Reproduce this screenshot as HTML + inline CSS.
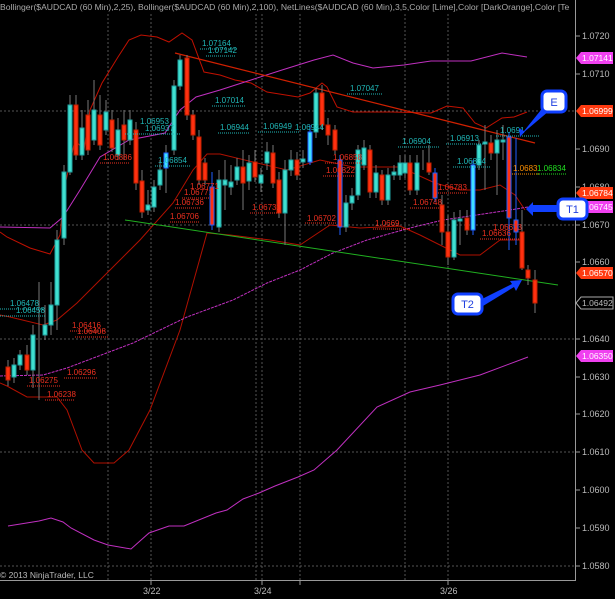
<!DOCTYPE html>
<html><head><meta charset="utf-8"><style>
html,body{margin:0;padding:0;background:#000;width:615px;height:599px;overflow:hidden}
svg{display:block;font-family:"Liberation Sans",sans-serif}
</style></head><body>
<svg width="615" height="599" viewBox="0 0 615 599" xmlns="http://www.w3.org/2000/svg">
<rect width="615" height="599" fill="#000"/>
<!-- grid -->
<g stroke="#555" stroke-width="1" stroke-dasharray="2,2">
<line x1="0" y1="111" x2="575" y2="111"/><line x1="0" y1="225" x2="575" y2="225"/>
<line x1="0" y1="339" x2="575" y2="339"/><line x1="0" y1="452" x2="575" y2="452"/>
<line x1="0" y1="566" x2="575" y2="566"/>
<line x1="108" y1="14" x2="108" y2="580"/><line x1="151" y1="14" x2="151" y2="580"/>
<line x1="256" y1="14" x2="256" y2="580"/><line x1="262" y1="14" x2="262" y2="580"/>
<line x1="300" y1="14" x2="300" y2="580"/><line x1="405" y1="14" x2="405" y2="580"/>
<line x1="448" y1="14" x2="448" y2="580"/>
</g>
<!-- axes -->
<g stroke="#999" stroke-width="1">
<line x1="575.5" y1="0" x2="575.5" y2="581"/><line x1="0" y1="580.5" x2="576" y2="580.5"/>
<line x1="151" y1="581" x2="151" y2="585"/><line x1="262" y1="581" x2="262" y2="585"/>
<line x1="300" y1="581" x2="300" y2="585"/><line x1="448" y1="581" x2="448" y2="585"/>
<line x1="576" y1="36" x2="580" y2="36"/><line x1="576" y1="74" x2="580" y2="74"/>
<line x1="576" y1="149" x2="580" y2="149"/><line x1="576" y1="187" x2="580" y2="187"/>
<line x1="576" y1="225" x2="580" y2="225"/><line x1="576" y1="262" x2="580" y2="262"/>
<line x1="576" y1="339" x2="580" y2="339"/><line x1="576" y1="377" x2="580" y2="377"/>
<line x1="576" y1="414" x2="580" y2="414"/><line x1="576" y1="452" x2="580" y2="452"/>
<line x1="576" y1="490" x2="580" y2="490"/><line x1="576" y1="528" x2="580" y2="528"/>
<line x1="576" y1="566" x2="580" y2="566"/>
</g>
<g fill="#bbb" font-size="9">
<text x="582" y="39">1.0720</text><text x="582" y="77">1.0710</text><text x="582" y="152">1.0690</text>
<text x="582" y="190">1.0680</text><text x="582" y="228">1.0670</text><text x="582" y="265">1.0660</text>
<text x="582" y="342">1.0640</text><text x="582" y="380">1.0630</text><text x="582" y="417">1.0620</text>
<text x="582" y="455">1.0610</text><text x="582" y="493">1.0600</text><text x="582" y="531">1.0590</text>
<text x="582" y="569">1.0580</text>
<text x="143" y="594">3/22</text><text x="254" y="594">3/24</text><text x="440" y="594">3/26</text>
<text x="0" y="578" font-size="8.5">© 2013 NinjaTrader, LLC</text>
</g>
<text x="0" y="10" fill="#aaa" font-size="8.6">Bollinger($AUDCAD (60 Min),2,25), Bollinger($AUDCAD (60 Min),2,100), NetLines($AUDCAD (60 Min),3,5,Color [Lime],Color [DarkOrange],Color [Te</text>

<!-- indicator lines -->
<g fill="none" stroke-width="1">
<polyline stroke="#c01000" points="0,232 7,237 30,248 50,254 60,235 65,185 75,140 84,150 90,110 102,83 118,57 129,40 141,35 157,37 169,42 182,33 192,40 204,72 220,75 235,80 251,83 267,92 298,97 310,93 322,83 327,87 337,107 353,112 392,112 431,113 447,106 463,108 475,123 486,128 502,118 514,117 527,112"/>
<polyline stroke="#b01000" points="0,315 10,317 43,325 57,320 77,303 107,273 140,240 173,203 193,170 207,154 220,154 253,162 287,170 320,160 353,167 400,167 435,183 460,190 480,190 500,185 515,195 525,210"/>
<polyline stroke="#b01000" points="0,383 7,386 27,397 57,397 67,410 82,450 94,463 114,463 129,450 150,410 180,330 207,233 230,235 270,240 300,245 330,225 360,228 400,226 420,235 440,245 460,255 480,255 500,240 520,240"/>
<polyline stroke="#c030c0" points="0,227 50,228 63,217 80,190 100,157 129,140 165,133 180,110 196,97 220,90 251,80 282,70 314,60 333,55 353,63 373,68 404,65 431,61 471,61 502,53 527,57"/>
<polyline stroke="#c030c0" stroke-dasharray="3,1" points="0,376 43,375 67,368 133,343 187,317 233,300 267,283 300,270 333,253 367,240 410,228 443,220 510,210 528,207"/>
<polyline stroke="#c030c0" points="8,526 39,521 51,518 63,522 71,528 94,540 108,545 131,549 149,533 169,526 184,526 216,513 227,510 243,499 259,493 275,486 298,477 314,470 337,450 377,407 410,392 440,385 480,375 528,357"/>
<line x1="125" y1="220" x2="558" y2="285" stroke="#20b020"/>
<line x1="175" y1="53" x2="535" y2="143" stroke="#d02000" stroke-width="1.3"/>
</g>

<!-- candles -->
<g stroke="#777" stroke-width="1">
<line x1="8" y1="360" x2="8" y2="386"/><line x1="14" y1="358" x2="14" y2="383"/><line x1="20" y1="350" x2="20" y2="370"/>
<line x1="27" y1="345" x2="27" y2="375"/><line x1="33" y1="325" x2="33" y2="388"/><line x1="39" y1="282" x2="39" y2="400"/>
<line x1="45" y1="305" x2="45" y2="340"/><line x1="51" y1="282" x2="51" y2="335"/><line x1="57" y1="230" x2="57" y2="330"/>
<line x1="64" y1="165" x2="64" y2="245"/><line x1="70" y1="95" x2="70" y2="175"/><line x1="76" y1="95" x2="76" y2="160"/>
<line x1="82" y1="110" x2="82" y2="160"/><line x1="88" y1="100" x2="88" y2="155"/><line x1="94" y1="80" x2="94" y2="145"/>
<line x1="100" y1="95" x2="100" y2="150"/><line x1="106" y1="100" x2="106" y2="135"/><line x1="112" y1="110" x2="112" y2="152"/>
<line x1="118" y1="118" x2="118" y2="160"/><line x1="124" y1="110" x2="124" y2="160"/><line x1="130" y1="110" x2="130" y2="145"/>
<line x1="136" y1="122" x2="136" y2="190"/><line x1="142" y1="170" x2="142" y2="218"/><line x1="148" y1="190" x2="148" y2="215"/>
<line x1="154" y1="180" x2="154" y2="212"/><line x1="160" y1="160" x2="160" y2="190"/><line x1="166" y1="145" x2="166" y2="193"/>
<line x1="174" y1="80" x2="174" y2="155"/><line x1="180" y1="55" x2="180" y2="90"/><line x1="187" y1="55" x2="187" y2="120"/>
<line x1="193" y1="110" x2="193" y2="140"/><line x1="199" y1="130" x2="199" y2="185"/><line x1="205" y1="158" x2="205" y2="185"/>
<line x1="212" y1="172" x2="212" y2="230" stroke="#2060ff"/><line x1="219" y1="170" x2="219" y2="232"/><line x1="225" y1="160" x2="225" y2="210"/>
<line x1="231" y1="165" x2="231" y2="195"/><line x1="237" y1="158" x2="237" y2="185"/><line x1="243" y1="150" x2="243" y2="210"/>
<line x1="249" y1="155" x2="249" y2="190"/><line x1="255" y1="150" x2="255" y2="182"/><line x1="261" y1="168" x2="261" y2="192"/>
<line x1="267" y1="142" x2="267" y2="170"/><line x1="273" y1="145" x2="273" y2="188"/><line x1="279" y1="172" x2="279" y2="218"/>
<line x1="285" y1="160" x2="285" y2="245"/><line x1="291" y1="150" x2="291" y2="176"/><line x1="297" y1="152" x2="297" y2="180"/>
<line x1="303" y1="150" x2="303" y2="168"/><line x1="310" y1="125" x2="310" y2="165" stroke="#2060ff"/><line x1="316" y1="88" x2="316" y2="138"/>
<line x1="322" y1="85" x2="322" y2="130"/><line x1="328" y1="118" x2="328" y2="145"/><line x1="335" y1="125" x2="335" y2="155"/>
<line x1="340" y1="155" x2="340" y2="235" stroke="#2060ff"/><line x1="346" y1="195" x2="346" y2="232"/><line x1="352" y1="188" x2="352" y2="210"/>
<line x1="358" y1="145" x2="358" y2="200"/><line x1="364" y1="140" x2="364" y2="170"/><line x1="370" y1="145" x2="370" y2="198"/>
<line x1="376" y1="165" x2="376" y2="198"/><line x1="382" y1="170" x2="382" y2="205"/><line x1="388" y1="168" x2="388" y2="205"/>
<line x1="394" y1="165" x2="394" y2="180"/><line x1="400" y1="155" x2="400" y2="180"/><line x1="405" y1="155" x2="405" y2="178"/>
<line x1="410" y1="155" x2="410" y2="195"/><line x1="417" y1="155" x2="417" y2="195"/><line x1="423" y1="150" x2="423" y2="170"/>
<line x1="429" y1="145" x2="429" y2="175"/><line x1="435" y1="168" x2="435" y2="202" stroke="#2060ff"/><line x1="442" y1="195" x2="442" y2="245"/>
<line x1="448" y1="215" x2="448" y2="265"/><line x1="454" y1="212" x2="454" y2="260"/><line x1="460" y1="210" x2="460" y2="245"/>
<line x1="467" y1="210" x2="467" y2="235"/><line x1="473" y1="160" x2="473" y2="235" stroke="#2060ff"/><line x1="479" y1="140" x2="479" y2="170"/>
<line x1="485" y1="125" x2="485" y2="190"/><line x1="491" y1="135" x2="491" y2="160"/><line x1="497" y1="130" x2="497" y2="195"/>
<line x1="503" y1="125" x2="503" y2="160"/><line x1="509" y1="132" x2="509" y2="250" stroke="#2060ff"/><line x1="516" y1="138" x2="516" y2="245" stroke="#2060ff"/>
<line x1="522" y1="210" x2="522" y2="270"/><line x1="528" y1="265" x2="528" y2="285"/><line x1="535" y1="270" x2="535" y2="313"/>
</g>
<g stroke-width="1">
<g fill="#40e0d0" stroke="#20a0a0">
<rect x="12" y="365" width="4" height="12"/><rect x="18" y="355" width="4" height="10"/><rect x="31" y="335" width="4" height="35"/>
<rect x="43" y="325" width="4" height="10"/><rect x="49" y="305" width="4" height="20"/><rect x="55" y="240" width="4" height="65"/>
<rect x="62" y="172" width="4" height="66"/><rect x="68" y="105" width="4" height="67"/><rect x="80" y="128" width="4" height="27"/>
<rect x="92" y="110" width="4" height="30"/><rect x="104" y="112" width="4" height="18"/><rect x="116" y="130" width="4" height="25"/>
<rect x="128" y="120" width="4" height="20"/><rect x="146" y="205" width="4" height="5"/><rect x="152" y="187" width="4" height="20"/>
<rect x="158" y="170" width="4" height="15"/><rect x="172" y="86" width="4" height="64"/><rect x="178" y="60" width="4" height="26"/>
<rect x="217" y="180" width="4" height="47"/><rect x="223" y="180" width="4" height="5"/><rect x="229" y="182" width="4" height="5"/>
<rect x="235" y="167" width="4" height="13"/><rect x="247" y="163" width="4" height="18"/><rect x="259" y="175" width="4" height="8"/>
<rect x="265" y="152" width="4" height="11"/><rect x="283" y="170" width="4" height="43"/><rect x="289" y="160" width="4" height="10"/>
<rect x="301" y="159" width="4" height="3"/><rect x="314" y="93" width="4" height="39"/><rect x="344" y="203" width="4" height="24"/>
<rect x="350" y="196" width="4" height="7"/><rect x="356" y="150" width="4" height="45"/><rect x="362" y="148" width="4" height="17"/>
<rect x="374" y="173" width="4" height="19"/><rect x="386" y="175" width="4" height="25"/><rect x="392" y="172" width="4" height="3"/>
<rect x="398" y="163" width="4" height="12"/><rect x="403" y="163" width="4" height="10"/><rect x="415" y="163" width="4" height="27"/>
<rect x="452" y="220" width="4" height="37"/><rect x="458" y="219" width="4" height="2"/><rect x="477" y="145" width="4" height="20"/>
<rect x="483" y="142" width="4" height="2"/><rect x="495" y="140" width="4" height="13"/><rect x="501" y="140" width="4" height="2"/>
</g>
<g fill="#ff3010" stroke="#c02000">
<rect x="6" y="367" width="4" height="13"/><rect x="25" y="355" width="4" height="15"/><rect x="74" y="105" width="4" height="50"/>
<rect x="86" y="115" width="4" height="35"/><rect x="98" y="115" width="4" height="30"/><rect x="110" y="120" width="4" height="28"/>
<rect x="122" y="125" width="4" height="15"/><rect x="134" y="130" width="4" height="53"/><rect x="140" y="181" width="4" height="31"/>
<rect x="185" y="58" width="4" height="57"/><rect x="191" y="115" width="4" height="20"/><rect x="197" y="137" width="4" height="43"/>
<rect x="203" y="163" width="4" height="17"/><rect x="241" y="167" width="4" height="16"/><rect x="253" y="162" width="4" height="15"/>
<rect x="271" y="153" width="4" height="30"/><rect x="277" y="180" width="4" height="33"/><rect x="295" y="160" width="4" height="15"/>
<rect x="320" y="93" width="4" height="32"/><rect x="326" y="125" width="4" height="10"/><rect x="333" y="130" width="4" height="20"/>
<rect x="368" y="150" width="4" height="42"/><rect x="380" y="175" width="4" height="25"/><rect x="408" y="163" width="4" height="27"/>
<rect x="427" y="163" width="4" height="9"/><rect x="440" y="205" width="4" height="27"/><rect x="446" y="232" width="4" height="25"/>
<rect x="465" y="218" width="4" height="12"/><rect x="489" y="143" width="4" height="10"/>
<rect x="520" y="232" width="4" height="36"/><rect x="526" y="270" width="4" height="8"/><rect x="533" y="280" width="4" height="23"/>
</g>
<rect x="164" y="153" width="4" height="15" fill="#40e0ff" stroke="#2060ff"/>
<rect x="210" y="187" width="4" height="38" fill="#ff3010" stroke="#2060ff"/>
<rect x="308" y="132" width="4" height="30" fill="#40e0ff" stroke="#2060ff"/>
<rect x="338" y="160" width="4" height="67" fill="#ff3010" stroke="#2060ff"/>
<rect x="433" y="173" width="4" height="25" fill="#ff3010" stroke="#2060ff"/>
<rect x="471" y="165" width="4" height="65" fill="#40e0ff" stroke="#2060ff"/>
<rect x="507" y="137" width="4" height="81" fill="#ff3010" stroke="#2060ff"/>
<rect x="514" y="220" width="4" height="12" fill="#ff3010" stroke="#2060ff"/>
</g>

<!-- level labels -->
<g font-size="8" fill="#20b8b8">
<text x="202" y="46">1.07164</text><text x="208" y="53">1.07142</text><text x="215" y="103">1.07014</text>
<text x="350" y="91">1.07047</text><text x="220" y="130">1.06944</text><text x="263" y="129">1.06949</text>
<text x="295" y="130">1.06944</text><text x="140" y="124">1.06953</text><text x="145" y="131">1.06937</text>
<text x="402" y="144">1.06904</text><text x="450" y="141">1.06913</text><text x="500" y="133">1.0691</text>
<text x="158" y="163">1.06854</text><text x="457" y="164">1.06834</text>
<text x="10" y="306">1.06478</text><text x="16" y="313">1.06458</text>
</g>
<g stroke="#20b8b8" stroke-dasharray="1,1">
<line x1="200" y1="49" x2="238" y2="49"/><line x1="206" y1="56" x2="236" y2="56"/><line x1="212" y1="106" x2="246" y2="106"/>
<line x1="347" y1="94" x2="382" y2="94"/><line x1="218" y1="133" x2="250" y2="133"/><line x1="258" y1="132" x2="300" y2="132"/>
<line x1="125" y1="134" x2="180" y2="134"/><line x1="398" y1="147" x2="440" y2="147"/><line x1="446" y1="144" x2="485" y2="144"/>
<line x1="496" y1="136" x2="540" y2="136"/><line x1="155" y1="166" x2="190" y2="166"/><line x1="453" y1="167" x2="490" y2="167"/>
<line x1="0" y1="309" x2="44" y2="309"/><line x1="0" y1="316" x2="46" y2="316"/>
</g>
<g font-size="8" fill="#ee3020">
<text x="103" y="160">1.06886</text><text x="333" y="160">1.06858</text><text x="326" y="173">1.06822</text>
<text x="190" y="189">1.06771</text><text x="184" y="195">1.06771</text><text x="175" y="205">1.06736</text><text x="170" y="219">1.06706</text>
<text x="252" y="210">1.06732</text><text x="307" y="221">1.06702</text><text x="375" y="226">1.0669</text>
<text x="438" y="190">1.06783</text><text x="413" y="205">1.06748</text><text x="493" y="230">1.06633</text><text x="482" y="236">1.06636</text>
<text x="72" y="328">1.06416</text><text x="77" y="334">1.06408</text><text x="67" y="375">1.06296</text>
<text x="29" y="383">1.06275</text><text x="47" y="397">1.06238</text>
</g>
<g stroke="#ee3020" stroke-dasharray="1,1">
<line x1="100" y1="163" x2="130" y2="163"/><line x1="325" y1="163" x2="362" y2="163"/><line x1="323" y1="176" x2="355" y2="176"/>
<line x1="182" y1="198" x2="210" y2="198"/><line x1="175" y1="208" x2="200" y2="208"/><line x1="170" y1="222" x2="200" y2="222"/>
<line x1="250" y1="213" x2="280" y2="213"/><line x1="305" y1="223" x2="336" y2="223"/><line x1="373" y1="229" x2="410" y2="229"/>
<line x1="436" y1="193" x2="467" y2="193"/><line x1="410" y1="208" x2="442" y2="208"/><line x1="480" y1="239" x2="520" y2="239"/>
<line x1="70" y1="331" x2="105" y2="331"/><line x1="75" y1="337" x2="108" y2="337"/><line x1="64" y1="378" x2="98" y2="378"/>
<line x1="27" y1="386" x2="60" y2="386"/><line x1="45" y1="400" x2="75" y2="400"/>
</g>
<text x="513" y="171" font-size="8" fill="#ff9000">1.0683</text>
<line x1="512" y1="174" x2="540" y2="174" stroke="#ff9000" stroke-dasharray="1,1"/>
<text x="537" y="171" font-size="8" fill="#20e020">1.06834</text>
<line x1="537" y1="174" x2="566" y2="174" stroke="#20e020" stroke-dasharray="1,1"/>

<!-- price tags -->
<g font-size="8.5" fill="#fff">
<path d="M576,58 l5,-6 h32 v12 h-32z" fill="#f040f0"/><text x="582" y="61">1.07141</text>
<path d="M576,111 l5,-6 h32 v12 h-32z" fill="#ff3a10"/><text x="582" y="114">1.06999</text>
<path d="M576,193 l5,-6 h32 v12 h-32z" fill="#ff3a10"/><text x="582" y="196">1.06784</text>
<path d="M576,207 l5,-6 h32 v12 h-32z" fill="#f040f0"/><text x="582" y="210">1.06745</text>
<path d="M576,273 l5,-6 h32 v12 h-32z" fill="#ff3a10"/><text x="582" y="276">1.06570</text>
<path d="M576,303 l5,-6 h32 v12 h-32z" fill="#000" stroke="#aaa"/><text x="582" y="306" fill="#bbb">1.06492</text>
<path d="M576,356 l5,-6 h32 v12 h-32z" fill="#f040f0"/><text x="582" y="359">1.06350</text>
</g>

<!-- callouts -->
<g fill="#1040ff">
<polygon points="545,105 549,111 523,133 528,128 520,137 519,128 524,131"/>
<polygon points="559,205 559,212 533,212 533,216 526,209 533,202 533,205"/>
<polygon points="480,300 483,306 514,287 516,291 522,280 510,281 512,284"/>
</g>
<rect x="542" y="91" width="24" height="21" rx="5" fill="#fff" stroke="#1040ff" stroke-width="3"/>
<text x="554" y="106" font-size="11" fill="#2040e0" text-anchor="middle">E</text>
<rect x="558" y="199" width="29" height="20" rx="5" fill="#fff" stroke="#1040ff" stroke-width="3"/>
<text x="572.5" y="213" font-size="11" fill="#2040e0" text-anchor="middle">T1</text>
<rect x="453" y="294" width="29" height="20" rx="5" fill="#fff" stroke="#1040ff" stroke-width="3"/>
<text x="467.5" y="308" font-size="11" fill="#2040e0" text-anchor="middle">T2</text>
</svg>
</body></html>
